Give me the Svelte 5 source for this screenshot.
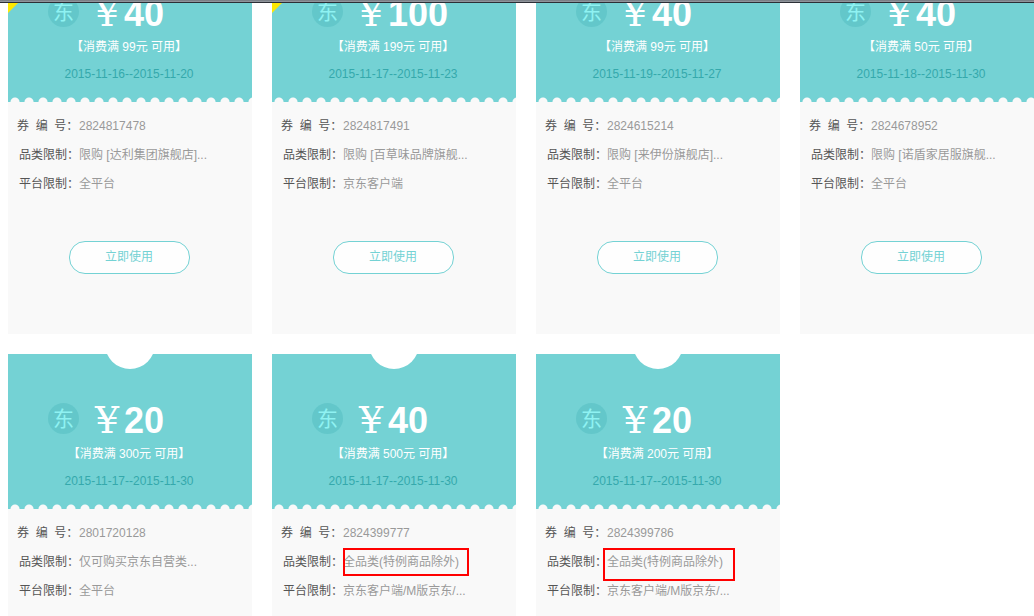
<script>
  const coupons = [
    { isNew: true, amount: 40, min: 99, from: '2015-11-16', to: '2015-11-20', code: '2824817478', category: '限购 [达利集团旗舰店]...', platform: '全平台' },
    { isNew: true, amount: 100, min: 199, from: '2015-11-17', to: '2015-11-23', code: '2824817491', category: '限购 [百草味品牌旗舰...', platform: '京东客户端' },
    { amount: 40, min: 99, from: '2015-11-19', to: '2015-11-27', code: '2824615214', category: '限购 [来伊份旗舰店]...', platform: '全平台' },
    { amount: 40, min: 50, from: '2015-11-18', to: '2015-11-30', code: '2824678952', category: '限购 [诺盾家居服旗舰...', platform: '全平台' },
    { amount: 20, min: 300, from: '2015-11-17', to: '2015-11-30', code: '2801720128', category: '仅可购买京东自营类...', platform: '全平台' },
    { amount: 40, min: 500, from: '2015-11-17', to: '2015-11-30', code: '2824399777', category: '全品类(特例商品除外)', platform: '京东客户端/M版京东/...', mark: 'tight' },
    { amount: 20, min: 200, from: '2015-11-17', to: '2015-11-30', code: '2824399786', category: '全品类(特例商品除外)', platform: '京东客户端/M版京东/...', mark: 'loose' }
  ];
</script>

<div class="page">
  <div class="edge"></div>
  <main class="view">
    <div class="grid">
      {#each coupons as c}
        <article class="card">
          <header class="head">
            {#if c.isNew}<span class="corner"></span>{/if}
            <div class="price">
              <span class="badge">东</span>
              <span class="yen">¥</span>
              <strong>{c.amount}</strong>
            </div>
            <p class="rule">【消费满 {c.min}元 可用】</p>
            <p class="date">{c.from}--{c.to}</p>
          </header>
          <div class="body">
            <dl>
              <dt class="spread">券&nbsp; 编&nbsp; 号：</dt>
              <dd>{c.code}</dd>
              <dt>品类限制：</dt>
              <dd>{c.category}{#if c.mark}<span class="mark {c.mark}"></span>{/if}</dd>
              <dt>平台限制：</dt>
              <dd>{c.platform}</dd>
            </dl>
            <button type="button">立即使用</button>
          </div>
        </article>
      {/each}
    </div>
  </main>
</div>

<style>
  :global(body) {
    margin: 0;
    background: #fff;
  }
  .page {
    height: 100vh;
    overflow: hidden;
    display: flex;
    flex-direction: column;
    font: 12px/29px "Liberation Sans", "Noto Sans CJK SC", sans-serif;
    color: #555;
  }
  .edge {
    flex: none;
    height: 3px;
    background: linear-gradient(#7b8087 0 1px, #8f949b 1px 2px, #2c2f36 2px);
  }
  .view {
    flex: 1;
    min-height: 0;
    overflow: hidden;
  }
  .grid {
    display: grid;
    grid-template-columns: repeat(4, 244px);
    gap: 20px;
    margin-top: -56px;
    padding-left: 8px;
  }
  .card {
    background: #f9f9f9;
  }
  .head {
    position: relative;
    box-sizing: border-box;
    height: 155px;
    padding-top: 45px;
    overflow: hidden;
    background: #74d2d4;
    text-align: center;
    color: #fff;
  }
  .head::before {
    content: "";
    position: absolute;
    top: -35px;
    left: 50%;
    width: 50px;
    height: 50px;
    margin-left: -25px;
    border-radius: 50%;
    background: #fff;
  }
  .head::after {
    content: "";
    position: absolute;
    inset: auto 0 0 0;
    height: 5px;
    background: radial-gradient(circle at 7px 5px, #f9f9f9 4px, transparent 5px) 0 0 / 14px 5px repeat-x;
  }
  .corner {
    position: absolute;
    top: 0;
    left: 0;
    width: 66px;
    height: 66px;
    background: #ffe800;
    clip-path: polygon(0 0, 100% 0, 0 100%);
  }
  .price {
    display: flex;
    align-items: center;
    height: 42px;
    padding-left: 40px;
  }
  .badge {
    width: 31px;
    height: 31px;
    margin: 0 11px 4px 0;
    border-radius: 50%;
    background: #63c7ca;
    color: #8ff2f2;
    font-size: 21px;
    line-height: 31px;
  }
  .yen {
    width: 34px;
    font: 38px/42px "DejaVu Serif", serif;
  }
  .price strong {
    font-size: 36px;
    line-height: 42px;
    padding-top: 1px;
  }
  p {
    margin: 0;
    padding-right: 2px;
    line-height: 27px;
  }
  .date {
    color: #35a9ac;
  }
  .body {
    display: flex;
    flex-direction: column;
    align-items: center;
    padding: 10px 0 60px;
  }
  dl {
    display: grid;
    grid-template-columns: 71px 1fr;
    align-self: stretch;
    margin: 0;
  }
  dt {
    padding-left: 11px;
    white-space: nowrap;
  }
  .spread {
    padding-left: 9px;
  }
  dd {
    position: relative;
    margin: 0;
    color: #999;
    white-space: nowrap;
  }
  .mark {
    position: absolute;
    top: 0;
    left: 0;
    box-sizing: border-box;
    width: 126px;
    height: 28px;
    border: 2px solid #f00;
  }
  .mark.loose {
    left: -4px;
    width: 132px;
    height: 33px;
  }
  button {
    width: 121px;
    height: 33px;
    margin: 42px 2px 0 0;
    padding: 0;
    border: 1px solid #74d2d4;
    border-radius: 16px;
    background: #fefefe;
    color: #74d2d4;
    font: inherit;
    line-height: 31px;
    cursor: pointer;
  }
</style>
